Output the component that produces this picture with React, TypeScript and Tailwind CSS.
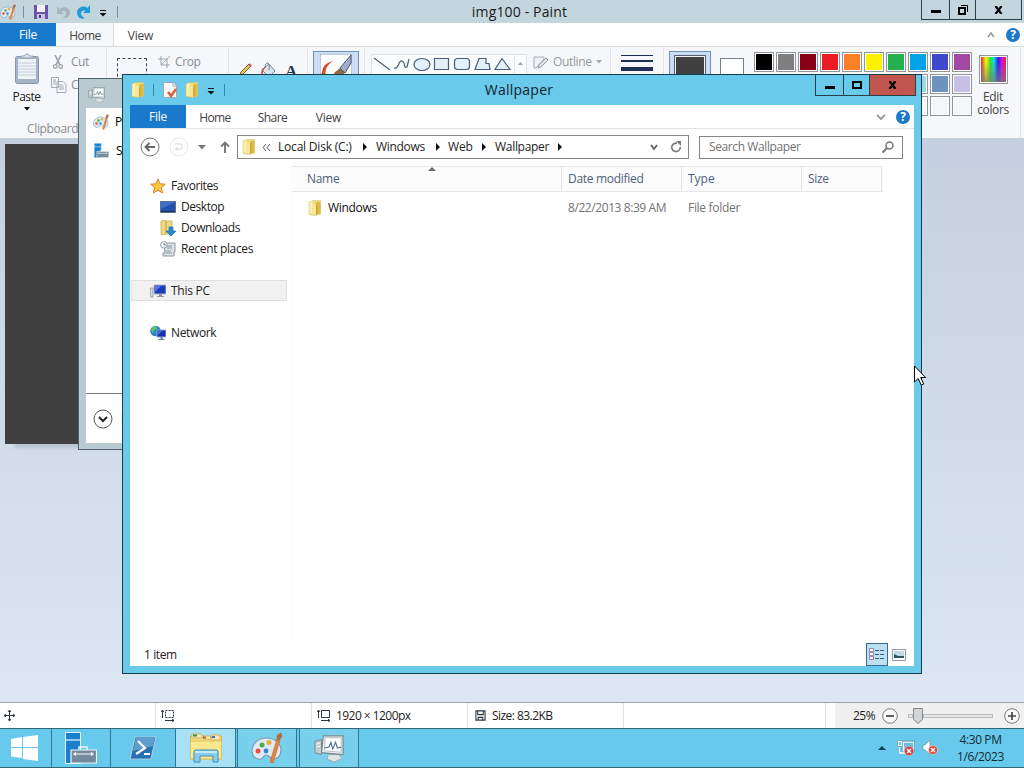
import type { ReactNode } from "react";

function Folder({ className = "w-4 h-4" }: { className?: string }) {
  return (
    <svg viewBox="0 0 16 16" className={`${className} shrink-0`}>
      <path d="M2 2l4-1.500h7.500V14L8 15.500 2 14.500z" fill="#eedb80" stroke="#d6bd62" strokeWidth=".5" />
      <path d="M9.500 2h4v11.500l-4 1.500z" fill="#dfbd45" />
      <path d="M2.500 2l3-1v13l-3-.5z" fill="#fbf1b2" />
      <path d="M6 3l3 2v10l-3-1z" fill="#f8e895" />
      <path d="M9 5l1.500-2v11L9 15z" fill="#c9a438" />
    </svg>
  );
}

function Palette({ className = "w-4 h-4" }: { className?: string }) {
  return (
    <svg viewBox="0 0 32 32" className={`${className} shrink-0`}>
      <path d="M15 6C7 6 1 12 1 19c0 6 5 9 9 8 3-1 2-4 5-4 4 0 4 5 8 4 5-1 7-5 7-9 0-7-7-12-15-12z" fill="#dcebf5" stroke="#7d9db3" strokeWidth="1.2" />
      <circle cx="7" cy="19" r="2.5" fill="#e0523c" />
      <circle cx="11" cy="13" r="2.5" fill="#58a94d" />
      <circle cx="18" cy="10.500" r="2.500" fill="#eab13a" />
      <circle cx="15" cy="19" r="2.400" fill="#3f82cf" />
      <path d="M26 7l3 1-7 23-3-1z" fill="#e8853a" stroke="#b3672d" strokeWidth=".6" />
      <path d="M25.500 8l.5-5 4-2.500 1.500 3.500-3 4.500z" fill="#b06a3a" />
    </svg>
  );
}

function ServerManager({ className }: { className: string }) {
  return (
    <svg viewBox="0 0 32 32" className={`${className} shrink-0`}>
      <path d="M.5.500h15v31H.5z" fill="#1b80cb" stroke="#dff2fb" strokeWidth="1" />
      <path d="M0 8h15" stroke="#dff2fb" strokeWidth="1.3" />
      <path d="M14 18v-3h8v3" fill="none" stroke="#eef6fa" strokeWidth="1.4" />
      <path d="M6 18h25.5v13H6z" fill="#75899c" stroke="#eef6fa" strokeWidth="1.2" />
      <path d="M9 22h19M11 20.500l-2 1.500 2 1.500M26 20.500l2 1.500-2 1.500" fill="none" stroke="#fff" strokeWidth="1.2" />
    </svg>
  );
}

function TaskMonitor({ className }: { className: string }) {
  return (
    <svg viewBox="0 0 32 32" className={`${className} shrink-0`}>
      <path d="M1 9l7-2v16l-7-2z" fill="#c5cbcd" stroke="#7c878c" />
      <path d="M2.500 12l4-1M2.500 15l4-1" stroke="#fff" />
      <path d="M15 23h11l4 4-8 4-8-3z" fill="#dfe4e6" stroke="#8b979d" strokeWidth=".7" />
      <path d="M10 3h21v20L8 21z" fill="#eef3f5" stroke="#768a93" strokeWidth="1.300" />
      <path d="M12 5h17v15.500l-18-1.500z" fill="#fff" stroke="#aebfc6" />
      <path d="M11 16l5-1 2-5 2 7 3-7 2 6 4-1" fill="none" stroke="#46718c" strokeWidth="1.200" />
    </svg>
  );
}

function Help() {
  return (
    <span className="flex h-[14px] w-[14px] shrink-0 items-center justify-center rounded-full bg-[#1c78ca] text-[12px] leading-none font-bold text-white">
      ?
    </span>
  );
}

function Down({ className = "text-black" }: { className?: string }) {
  return (
    <svg viewBox="0 0 6 4" className={`h-1 w-1.5 shrink-0 ${className}`}>
      <path d="M0 0h6L3 3.500z" fill="currentColor" />
    </svg>
  );
}

function QuickMenu() {
  return (
    <svg viewBox="0 0 8 7" className="h-[7px] w-2 shrink-0">
      <path d="M1 .5h6" stroke="#111" />
      <path d="M.5 3h7L4 6.500z" fill="#111" />
    </svg>
  );
}

function WinButton({ className, children }: { className: string; children: ReactNode }) {
  return <div className={`flex items-center justify-center border-r border-b border-[#2b3f48] ${className}`}>{children}</div>;
}

const Min = () => <span className="mt-1 h-[3px] w-[10px] bg-black" />;
const Close = () => (
  <svg viewBox="0 0 9 8" className="h-2 w-[9px]">
    <path d="M1.500 0l6 8M7.500 0l-6 8" stroke="#000" strokeWidth="2.200" />
  </svg>
);

const swatches = [
  ["bg-black", "bg-[#7f7f7f]", "bg-[#880015]", "bg-[#ed1c24]", "bg-[#ff7f27]", "bg-[#fff200]", "bg-[#22b14c]", "bg-[#00a2e8]", "bg-[#3f48cc]", "bg-[#a349a4]"],
  ["bg-white", "bg-[#c3c3c3]", "bg-[#b97a57]", "bg-[#ffaec9]", "bg-[#ffc90e]", "bg-[#efe4b0]", "bg-[#b5e61d]", "bg-[#99d9ea]", "bg-[#7092be]", "bg-[#c8bfe7]"],
  ["bg-[#f5f6f7]", "bg-[#f5f6f7]", "bg-[#f5f6f7]", "bg-[#f5f6f7]", "bg-[#f5f6f7]", "bg-[#f5f6f7]", "bg-[#f5f6f7]", "bg-[#f5f6f7]", "bg-[#f5f6f7]", "bg-[#f5f6f7]"],
];

function PaintTitle() {
  return (
    <div className="grid h-[23px] shrink-0 grid-cols-[350px_1fr_350px] bg-[#c4d6dd]">
      <div className="flex items-center">
        <Palette />
        <div className="ml-[7px] h-3 w-px bg-[#7c8e96]" />
        <svg viewBox="0 0 14 14" className="ml-[10px] h-[14px] w-[14px]">
          <path d="M0 0h14v14H0z" fill="#6d55a5" />
          <path d="M3 0h8v7H3z" fill="#f3f1fa" />
          <path d="M3 9h8v5H3z" fill="#c9c2e0" />
          <path d="M5 10h2v3H5z" fill="#4b3b7b" />
        </svg>
        <svg viewBox="0 0 14 14" className="ml-2 h-[14px] w-[14px]">
          <path d="M1 1v8h7L5.500 6.500C8 5 10 6 10 8.500S8 12 6 13c4 1 8-1 8-5.500S8 .5 3.500 4z" fill="#a7b4bd" />
        </svg>
        <svg viewBox="0 0 14 14" className="ml-[7px] h-[14px] w-[14px]">
          <path d="M13 0v8H6l2.500-2.300C6 5 4 6 4 8.500S6 12 8 13C4 15 0 12 0 7.500S6-.5 10.500 3z" fill="#229bd9" />
        </svg>
        <div className="ml-2 flex pt-[3px]"><QuickMenu /></div>
        <div className="ml-[10px] h-3 w-px bg-[#7c8e96]" />
      </div>
      <div className="pl-[15px] text-center text-[14px] leading-6 tracking-[0.15px] text-[#1a1a1a]">img100 - Paint</div>
      <div className="flex h-5 justify-end pr-0.5">
        <WinButton className="w-[29px] border-l"><Min /></WinButton>
        <WinButton className="w-[26px]">
          <svg viewBox="0 0 10 10" className="h-[10px] w-[10px]">
            <path d="M3 .5h6.500V7" fill="none" stroke="#000" />
            <path d="M1 3h6v6H1z" fill="none" stroke="#000" strokeWidth="2" />
          </svg>
        </WinButton>
        <WinButton className="w-[46px]"><Close /></WinButton>
      </div>
    </div>
  );
}

function PaintRibbon() {
  return (
    <div className="flex h-[92px] shrink-0 overflow-hidden border-t border-[#dadbdc] bg-[#f5f7fa] text-[12px] text-[#444]">
      <div className="flex w-[107px] shrink-0 flex-col border-r border-[#e1e4e8]">
        <div className="flex h-[74px]">
          <div className="flex w-[53px] flex-col items-center pt-[6px] text-[#222]">
            <svg viewBox="0 0 26 32" className="h-8 w-[26px]">
              <rect x="1.500" y="3.500" width="23" height="27" rx="2" fill="#a3b4c8" stroke="#8797ab" />
              <path d="M4 6h18v20H4z" fill="#eef3f8" />
              <path d="M4 10h18M4 13h18M4 16h18M4 19h18M4 22h18" stroke="#c2cedb" />
              <path d="M7 5V3h3q3-4 6 0h3v2z" fill="#d7e0e9" stroke="#8596a8" strokeWidth=".8" />
            </svg>
            <div className="mt-[3px] leading-[17px] tracking-[-0.5px]">Paste</div>
            <Down className="mt-[2px] text-black" />
          </div>
          <div className="text-[#8a8d91]">
            <div className="flex h-[30px] items-center">
              <svg viewBox="0 0 10 14" className="h-[14px] w-[10px]">
                <path d="M2 0l5 10M8 0L3 10" stroke="#9aa3ab" strokeWidth="1.600" />
                <circle cx="2.300" cy="11.500" r="1.800" fill="none" stroke="#9aa3ab" strokeWidth="1.200" />
                <circle cx="7.700" cy="11.500" r="1.800" fill="none" stroke="#9aa3ab" strokeWidth="1.200" />
              </svg>
              <span className="ml-2 tracking-[-0.5px]">Cut</span>
            </div>
            <div className="-ml-0.5 flex h-[15px] items-center">
              <svg viewBox="0 0 16 16" className="h-4 w-4">
                <path d="M.5.500h7v10h-7zM6 4.500h6l3 3v8H6z" fill="#f5f7fa" stroke="#a1abb6" />
                <path d="M2 3h3M2 5h3M2 7h3M8 8h4M8 10h5M8 12h5" stroke="#a1abb6" />
              </svg>
              <span className="ml-1">Copy</span>
            </div>
          </div>
        </div>
        <div className="pl-[27px] tracking-[-0.35px] text-[#8b8b8b]">Clipboard</div>
      </div>
      <div className="flex w-[122px] shrink-0 items-start border-r border-[#e1e4e8] text-[#8a8d91]">
        <div className="mt-[11px] ml-[10px] h-6 w-[30px] border border-dashed border-[#30475c]" />
        <svg viewBox="0 0 13 12" className="mt-[9px] ml-[11px] h-3 w-[13px]">
          <path d="M3 0v9h9M0 3h9v9M3 9l9-9" fill="none" stroke="#a0a8b0" />
        </svg>
        <span className="mt-[6px] ml-1 tracking-[-0.4px]">Crop</span>
      </div>
      <div className="flex w-[79px] shrink-0 items-start gap-[8px] border-r border-[#e1e4e8] pt-[15px] pl-[9px]">
        <svg viewBox="0 0 14 16" className="h-4 w-[14px]">
          <path d="M1 15l2-5 8-8 2 2-8 8z" fill="#edc65d" stroke="#6f6035" />
          <path d="M11 2l2 2" stroke="#c1544a" strokeWidth="2" />
        </svg>
        <svg viewBox="0 0 17 17" className="h-[17px] w-[17px]">
          <path d="M2 8l7-6 6 7-6 6z" fill="#dbe5ed" stroke="#728290" />
          <path d="M5 6Q5 1 8 1q2 1 1 7" fill="none" stroke="#728290" />
          <path d="M2 7l4-3-3 5v5l-2-3z" fill="#e0483c" />
        </svg>
        <span className="mt-[2px] font-['Liberation_Serif',serif] text-[17px] leading-4 font-bold text-[#25334b]">A</span>
      </div>
      <div className="flex w-[57px] shrink-0 border-r border-[#e1e4e8] pl-[5px]">
        <div className="mt-1 flex h-[60px] w-[46px] justify-center border border-[#6f91b8] bg-[#c9def5] pt-0.5">
          <svg viewBox="0 0 32 32" className="h-8 w-8">
            <path d="M0 0h32v32H0z" fill="#fff" stroke="#7993ad" />
            <path d="M13 7Q5 9 3 14L1 22h4l1-7q2-5 7-8z" fill="#d6482c" />
            <path d="M31 1L20 14l5 5 6-10z" fill="#a3add0" stroke="#44506c" />
            <path d="M20 14l5 5-7 5q-3-1-4-5z" fill="#8d6b42" />
          </svg>
        </div>
      </div>
      <div className="flex w-[246px] shrink-0 border-r border-[#e1e4e8] pt-[7px] pl-[6px]">
        <div className="flex h-[50px] w-[156px] border border-[#dfe4ea] bg-[#fafcfe]">
          <svg viewBox="0 0 142 20" className="h-5 w-[142px]">
            <g fill="#e4f1fb" stroke="#46607c" strokeWidth="1.200">
              <path d="M2 3l16 12" />
              <path d="M22 13c5 2 4-8 8-7s1 8 5 6l2-8" fill="none" />
              <ellipse cx="50" cy="9.500" rx="8" ry="6" />
              <path d="M62.500 3.500h14v11h-14z" />
              <rect x="82.500" y="3.500" width="15" height="11" rx="3" />
              <path d="M103 14.500l4-11h7v5h3l1 6z" />
              <path d="M130 3.500l8 11h-15z" />
            </g>
          </svg>
          <div className="flex w-3 justify-center border-l border-[#dfe4ea] pt-[7px]">
            <svg viewBox="0 0 5 3" className="h-[3px] w-[5px]"><path d="M0 3l2.500-3L5 3z" fill="#9aa1a8" /></svg>
          </div>
        </div>
        <svg viewBox="0 0 16 14" className="ml-[6px] mt-0.5 h-[14px] w-4 shrink-0">
          <path d="M1 1h10v2L3 12H1z" fill="#edf0f4" stroke="#a7afb8" />
          <path d="M5 12l1-3 7-7 2 2-7 7z" fill="#dfe3e8" stroke="#959fa9" />
        </svg>
        <div className="ml-[4px] -mt-px tracking-[-0.35px] text-[#96999c]">Outline</div>
        <Down className="mt-[6px] ml-1 text-[#a7a9ac]" />
      </div>
      <div className="flex w-[53px] shrink-0 flex-col items-center gap-[4px] border-r border-[#e1e4e8] pt-2">
        <div className="h-px w-8 bg-[#1f2e55]" />
        <div className="h-0.5 w-8 bg-[#1f2e55]" />
        <div className="mt-px h-1 w-8 bg-[#1f2e55]" />
      </div>
      <div className="flex w-[357px] shrink-0 border-r border-[#e1e4e8] pl-[5px]">
        <div className="mt-1 h-[60px] w-[42px] border border-[#6f91b8] bg-[#c9def5] px-[4px] pt-[3px]">
          <div className="h-8 border border-[#56616b] bg-[#404040] outline outline-1 -outline-offset-2 outline-[#f0f3f5]" />
        </div>
        <div className="mt-[11px] ml-[9px] h-6 w-[24px] border border-[#777f87] bg-white" />
        <div className="mt-[5px] ml-[10px] flex flex-col gap-0.5">
          {swatches.map((row, r) => (
            <div key={r} className="flex gap-0.5">
              {row.map((colour, c) => (
                <div key={c} className="h-5 w-5 border border-[#92969b] bg-white p-px">
                  <div className={`h-full ${colour}`} />
                </div>
              ))}
            </div>
          ))}
        </div>
        <div className="flex w-[42px] flex-col items-center pt-2 text-center leading-[13px] tracking-[-0.35px]">
          <div className="mb-[6px] h-[29px] w-[29px] border border-[#92969b] bg-white p-px">
            <div className="h-full bg-[linear-gradient(to_bottom,transparent_20%,#777b),linear-gradient(to_right,#e22,#ef1_20%,#3d3_38%,#1dd_52%,#22e_68%,#d1d_85%,#f12)]" />
          </div>
          <div>Edit</div>
          <div>colors</div>
        </div>
      </div>
    </div>
  );
}

function SizeIcon({ dashed = false }: { dashed?: boolean }) {
  return (
    <svg viewBox="0 0 14 13" className="h-[13px] w-[14px]">
      <g fill="none" stroke="#2e3946">
        <path d="M4.500 1.500h8v7h-8z" strokeDasharray={dashed ? "2 1" : undefined} />
        <path d="M1.500 1v8M0 3l1.500-2L3 3M4 11.500h9M11 10l2 1.500-2 1.500" />
      </g>
    </svg>
  );
}

function PaintStatus() {
  return (
    <div className="flex h-[26px] shrink-0 items-stretch border-t border-[#9aa6b6] bg-white text-[12px] text-[#1d1d1d]">
      <div className="flex w-[156px] items-center border-r border-[#dfe2e5] pl-1">
        <svg viewBox="0 0 11 11" className="h-[11px] w-[11px]">
          <path d="M5.500 0v11M0 5.500h11M4 2l1.500-2L7 2M4 9l1.500 2L7 9M2 4L0 5.500 2 7M9 4l2 1.500L9 7" fill="none" stroke="#2e3946" />
        </svg>
      </div>
      <div className="flex w-[156px] items-center border-r border-[#dfe2e5] pl-[5px]"><SizeIcon dashed /></div>
      <div className="flex w-[156px] items-center gap-[5px] border-r border-[#dfe2e5] pl-[5px]"><SizeIcon /><span className="tracking-[-0.55px]">1920 × 1200px</span></div>
      <div className="flex w-[156px] items-center border-r border-[#dfe2e5] pl-[7px]">
        <svg viewBox="0 0 12 12" className="h-[11px] w-[11px]">
          <path d="M1 1h10v10H1zM3 1v4h6V1M3.500 11V8h5v3" fill="none" stroke="#2e3946" strokeWidth="1.200" />
        </svg>
        <span className="ml-[6px] tracking-[-0.55px]">Size: 83.2KB</span>
      </div>
      <div className="w-[202px] border-r border-[#dfe2e5]" />
      <div className="ml-[9px] flex flex-1 items-center bg-[#f0f0f0] pl-[18px]">
        <span className="w-[22px] tracking-[-0.5px]">25%</span>
        <Zoom sign="M4 8h8" className="ml-[7px]" />
        <div className="ml-[10px] flex h-4 w-[85px] items-center">
          <div className="h-[4px] w-[5px] border border-[#bbbdbf] bg-[#e4e6e7]" />
          <svg viewBox="0 0 10 16" className="h-4 w-[10px] shrink-0"><path d="M.5.500h9v11L5 15.500.500 11.500z" fill="#d3d5d7" stroke="#858789" /></svg>
          <div className="h-[4px] flex-1 border border-[#bbbdbf] bg-[#e4e6e7]" />
        </div>
        <Zoom sign="M4 8h8M8 4v8" className="ml-[11px]" />
      </div>
    </div>
  );
}

function Zoom({ sign, className }: { sign: string; className: string }) {
  return (
    <svg viewBox="0 0 16 16" className={`h-4 w-4 shrink-0 ${className}`}>
      <circle cx="8" cy="8" r="7.300" fill="#f8f8f8" stroke="#75787a" />
      <path d={sign} stroke="#454545" strokeWidth="1.700" />
    </svg>
  );
}

function Paint() {
  return (
    <div className="flex h-[728px] flex-col">
      <PaintTitle />
      <div className="flex h-[23px] shrink-0 bg-white text-[12px] text-[#444]">
        <div className="w-14 bg-[#1979ca] pt-[3px] text-center tracking-[-0.2px] text-white">File</div>
        <div className="-mb-px w-[58px] border-r border-[#dadbdc] bg-[#f5f7fa] pt-[4px] pl-px text-center tracking-[-0.6px]">Home</div>
        <div className="w-[53px] pt-[4px] text-center tracking-[-0.2px]">View</div>
        <div className="ml-auto flex items-center gap-[11px] pr-[4px]">
          <svg viewBox="0 0 8 6" className="h-1.5 w-2"><path d="M1 5l3-4 3 4" fill="none" stroke="#999" strokeWidth="1.600" /></svg>
          <Help />
        </div>
      </div>
      <PaintRibbon />
      <div className="flex-1 bg-linear-to-b from-[#c5cfdf] to-[#dce7f3] pt-[6px] pl-[5px]">
        <div className="h-[300px] w-[200px] bg-[#404040] shadow-[9px_5px_3px_-1px_#b9c3d3]" />
      </div>
      <PaintStatus />
    </div>
  );
}

function TaskWindow() {
  return (
    <div className="absolute top-[78px] left-[78px] flex h-[372px] w-[120px] flex-col border border-[#52616a] bg-[#b9cad0] px-[7px] pb-[6px] text-[12px] whitespace-nowrap text-black">
      <div className="flex h-[29px] items-center pt-0.5 pl-0.5"><TaskMonitor className="h-[17px] w-[17px]" /></div>
      <div className="flex flex-1 flex-col bg-white">
        <div className="flex h-[28px] items-center gap-[6px] pl-[7px]"><Palette /> Paint</div>
        <div className="flex h-[29px] items-center gap-[7px] pl-2"><ServerManager className="h-[15px] w-[15px]" /> Server Manager</div>
        <div className="mt-auto flex h-[50px] items-center gap-2 border-t border-[#777] pl-[7px]">
          <svg viewBox="0 0 20 20" className="h-5 w-5 shrink-0"><circle cx="10" cy="10" r="9" fill="#fff" stroke="#555" /><path d="M6 8l4 4 4-4" fill="none" stroke="#222" strokeWidth="2" /></svg>
          <span>More</span>
        </div>
      </div>
    </div>
  );
}

function NavRow({ icon, label, className = "pl-5", tracking = "tracking-[-0.25px]" }: { icon: ReactNode; label: string; className?: string; tracking?: string }) {
  return (
    <div className={`flex h-[21px] items-center gap-[5px] ${className}`}>
      {icon}
      <span className={`whitespace-nowrap ${tracking}`}>{label}</span>
    </div>
  );
}

function Sidebar() {
  return (
    <div className="w-[158px] shrink-0 pt-[9px]">
      <NavRow tracking="tracking-[-0.4px]" label="Favorites" icon={<svg viewBox="0 0 16 16" className="h-4 w-4"><path d="M8 .8l2.100 5 5.200.400-4 3.500 1.300 5.300L8 12.200 3.400 15l1.300-5.300-4-3.500L5.900 5.800z" fill="#ffc83d" stroke="#dc8230" /></svg>} />
      <NavRow className="pl-[30px]" tracking="tracking-[-0.45px]" label="Desktop" icon={<svg viewBox="0 0 16 14" className="h-[14px] w-4"><path d="M.5 1.500h15v11H.5z" fill="#2450ac" stroke="#5d7189" /><path d="M1 2h14L1 9z" fill="#3d70cb" /><path d="M1 11h14v1H1z" fill="#1c2c50" /></svg>} />
      <NavRow className="pl-[30px]" tracking="tracking-[-0.4px]" label="Downloads" icon={<svg viewBox="0 0 16 16" className="h-4 w-4"><path d="M1 1l5-1v14l-5 1zM6 1h6v13H6z" fill="#edd982" stroke="#c5ab52" strokeWidth=".7" /><path d="M9 7h4v4h3l-5 5-5-5h3z" fill="#268ad5" stroke="#1465a7" strokeWidth=".6" /></svg>} />
      <NavRow className="pl-[30px]" tracking="tracking-[-0.35px]" label="Recent places" icon={<svg viewBox="0 0 16 16" className="h-4 w-4"><path d="M4 2h11v9h-1v4H3v-3h2z" fill="#dfe3e6" stroke="#8c969e" /><path d="M7 5h5M7 7h5M6 10h5M6 12h6" stroke="#8d9aa3" /><circle cx="3.800" cy="3.800" r="3.300" fill="#f8fafa" stroke="#929fa6" /><path d="M4 2v2h2" fill="none" stroke="#687984" /></svg>} />
      <div className="mt-[21px] mr-px ml-px border border-[#e0e0e0] bg-[#f1f1f1]">
        <NavRow className="-my-px pl-[18px]" label="This PC" icon={<svg viewBox="0 0 16 16" className="h-4 w-4"><path d="M.5 5h2.500v9H.5z" fill="#dce2dc" stroke="#7f8b85" strokeWidth=".7" /><path d="M4 2h12v9H4z" fill="#1c39b6" stroke="#aab7d2" /><path d="M5 3h6L5 9z" fill="#5576da" /><path d="M9 11h3v2h2v1H7v-1h2z" fill="#8998a8" /></svg>} />
      </div>
      <div className="mt-[21px]">
        <NavRow tracking="tracking-[-0.35px]" label="Network" icon={<svg viewBox="0 0 16 16" className="h-4 w-4"><circle cx="5.500" cy="6" r="5.300" fill="#2688cc" /><path d="M1 4q3-4 5-3l1 3-3 1-1 4zM6 7l3-1 1 2-3 2z" fill="#61c363" /><path d="M7 5h9v7H7z" fill="#1731ad" stroke="#94a5cc" /><path d="M8 6h4l-4 4z" fill="#486fe1" /><path d="M10.500 12h2v2h2v1h-6v-1h2z" fill="#6c7d91" /></svg>} />
      </div>
    </div>
  );
}

const Crumb = () => <svg viewBox="0 0 4 8" className="h-2 w-1 shrink-0"><path d="M0 0l4 4-4 4z" fill="#111" /></svg>;

function AddressRow() {
  return (
    <div className="flex h-[38px] shrink-0 items-center pb-[2px] text-[12px] text-[#222]">
      <svg viewBox="0 0 20 20" className="ml-[10px] h-5 w-5"><circle cx="10" cy="10" r="9" fill="#fff" stroke="#777" /><path d="M15 10H6M9.500 6l-4 4 4 4" fill="none" stroke="#666" strokeWidth="1.900" /></svg>
      <svg viewBox="0 0 20 20" className="ml-[9px] h-5 w-5"><circle cx="10" cy="10" r="9" fill="#fff" stroke="#e6e6e6" /><path d="M6 7h7v5H6M9 14l-2-2 2-2" fill="none" stroke="#dadada" /></svg>
      <svg viewBox="0 0 8 5" className="ml-[9px] h-[5px] w-2"><path d="M0 0h8L4 4.500z" fill="#777" /></svg>
      <svg viewBox="0 0 10 12" className="ml-[14px] h-3 w-[10px]"><path d="M5 12V1.500M1 5.500l4-4 4 4" fill="none" stroke="#777" strokeWidth="1.900" /></svg>
      <div className="ml-[7px] flex h-6 w-[452px] items-center border border-[#858585] pl-[3px] tracking-[-0.2px]">
        <Folder />
        <svg viewBox="0 0 9 7" className="ml-[5px] h-[7px] w-[9px]"><path d="M4 0L1 3.500 4 7M8 0L5 3.500 8 7" fill="none" stroke="#555" /></svg>
        <span className="ml-[7px] w-[85px]">Local Disk (C:)</span><Crumb />
        <span className="ml-[9px] w-[60px] tracking-[-0.3px]">Windows</span><Crumb />
        <span className="ml-[8px] w-[34px]">Web</span><Crumb />
        <span className="ml-[9px] w-[63px] tracking-[-0.3px]">Wallpaper</span><Crumb />
        <svg viewBox="0 0 8 7" className="ml-auto h-[7px] w-2"><path d="M1 1l3 4 3-4" fill="none" stroke="#666" strokeWidth="1.900" /></svg>
        <svg viewBox="0 0 12 12" className="mr-[6px] ml-3 h-3 w-3"><path d="M2.700 3.500A4.300 4.300 0 1 0 10.300 6" fill="none" stroke="#777" strokeWidth="1.600" /><path d="M2.500 4A4.500 4.500 0 0 1 7 2.200" fill="none" stroke="#777" strokeWidth="1.600" /><path d="M6 0h5v5z" fill="#777" /></svg>
      </div>
      <div className="ml-[10px] flex h-[23px] w-[204px] items-center justify-between border border-[#858585] pr-2 pl-[9px] text-[#737373]">
        <span className="tracking-[-0.4px]">Search Wallpaper</span>
        <svg viewBox="0 0 12 12" className="h-3 w-3"><circle cx="7.500" cy="4.500" r="3.500" fill="none" stroke="#777" strokeWidth="1.500" /><path d="M5 7l-4.500 4.500" stroke="#777" strokeWidth="2" /></svg>
      </div>
    </div>
  );
}

function Explorer() {
  return (
    <div className="absolute top-[74px] left-[122px] flex h-[600px] w-[800px] flex-col border border-[#173c4a] bg-[#69caeb] px-[7px] pb-[7px]">
      <div className="grid h-[30px] shrink-0 grid-cols-[150px_1fr_150px]">
        <div className="flex items-center">
          <Folder />
          <div className="ml-[7px] h-3 w-px bg-[#3989a5]" />
          <svg viewBox="0 0 14 16" className="ml-[9px] h-4 w-[14px]"><path d="M.5.500h10l3 3v12H.5z" fill="#fafafa" stroke="#a0a8ac" /><path d="M10 1v3h3" fill="none" stroke="#a0a8ac" /><path d="M5 10l3 4 5-7" fill="none" stroke="#df5c3a" strokeWidth="2.500" /></svg>
          <Folder className="ml-[7px] h-4 w-4" />
          <div className="ml-[7px] pt-[3px]"><QuickMenu /></div>
          <div className="ml-[9px] h-3 w-px bg-[#3989a5]" />
        </div>
        <div className="pt-[5px] pr-[6px] text-center text-[14px] leading-5 tracking-[0.25px] text-[#12232b]">Wallpaper</div>
        <div className="-mr-[2px] flex h-[21px] justify-end">
          <WinButton className="w-[29px] border-l"><Min /></WinButton>
          <WinButton className="w-[26px]"><span className="h-2 w-[10px] border-2 border-black" /></WinButton>
          <WinButton className="w-[46px] bg-[#c1564f]"><Close /></WinButton>
        </div>
      </div>
      <div className="flex flex-1 flex-col bg-white text-[12px] text-[#222]">
        <div className="flex h-6 shrink-0 border-b border-[#e2e3e4] text-[#444]">
          <div className="w-14 bg-[#1979ca] pt-[3px] text-center tracking-[-0.2px] text-white">File</div>
          <div className="w-[58px] pt-[4px] text-center tracking-[-0.6px]">Home</div>
          <div className="w-[57px] pt-[4px] text-center tracking-[-0.6px]">Share</div>
          <div className="w-[55px] pt-[4px] text-center tracking-[-0.2px]">View</div>
          <div className="ml-auto flex items-center gap-[10px] pr-1">
            <svg viewBox="0 0 10 6" className="h-1.5 w-[10px]"><path d="M1 1l4 4 4-4" fill="none" stroke="#999" strokeWidth="1.800" /></svg>
            <Help />
          </div>
        </div>
        <AddressRow />
        <div className="-mt-px flex min-h-0 flex-1">
          <Sidebar />
          <div className="ml-[3px] flex-1 border-l border-[#fbfbfb]">
            <div className="flex h-[26px] w-[591px] border-y border-[#e5e7ea] bg-[#fcfcfd] text-[#4c607a]">
              <div className="relative w-[270px] border-r border-[#e0e3e6] pt-[3px] pl-[15px] tracking-[-0.3px]">
                Name
                <svg viewBox="0 0 8 4" className="absolute top-0 left-[136px] h-1 w-2"><path d="M4 0l4 4H0z" fill="#626b76" /></svg>
              </div>
              <div className="w-[120px] border-r border-[#e0e3e6] pt-[3px] pl-[6px] tracking-[-0.3px]">Date modified</div>
              <div className="w-[120px] border-r border-[#e0e3e6] pt-[3px] pl-[6px]">Type</div>
              <div className="w-[80px] border-r border-[#e0e3e6] pt-[3px] pl-[6px] tracking-[-0.3px]">Size</div>
            </div>
            <div className="mt-[5px] flex h-[21px] items-center text-[#737373]">
              <div className="flex w-[270px] items-center gap-[5px] pl-[15px] tracking-[-0.3px] text-[#111]"><Folder />Windows</div>
              <div className="w-[120px] pl-[6px] tracking-[-0.42px]">8/22/2013 8:39 AM</div>
              <div className="w-[120px] pl-[6px] tracking-[-0.3px]">File folder</div>
            </div>
          </div>
        </div>
        <div className="flex h-[23px] shrink-0 items-center pl-[14px]">
          <span className="tracking-[-0.4px]">1 item</span>
          <div className="ml-auto flex h-[23px] w-[22px] items-center justify-center border border-[#3b6b91] bg-[#bcdff1]">
            <svg viewBox="0 0 16 13" className="h-[13px] w-4"><path d="M.5.500h4v3h-4zM.5 4.500h4v3h-4zM.5 8.500h4v3h-4z" fill="#fff" stroke="#856d9c" strokeWidth=".8" /><path d="M6 2.500h9M6 6.500h9M6 10.500h9" stroke="#355c83" strokeDasharray="4 1" /></svg>
          </div>
          <svg viewBox="0 0 14 12" className="mr-2 ml-[4px] h-3 w-[14px]"><path d="M.5.500h13v11H.5z" fill="#fff" stroke="#8d9ca5" /><path d="M2 2h10v7H2z" fill="#bddbe9" /><path d="M2 5l4 2h6v2H2z" fill="#28595e" /></svg>
        </div>
      </div>
    </div>
  );
}

function TaskButton({ className, children }: { className: string; children: ReactNode }) {
  return <div className={`flex shrink-0 items-center justify-center border-r border-[#2c7892] ${className}`}>{children}</div>;
}

function Taskbar() {
  return (
    <div className="flex h-10 border-y border-[#2d6679] bg-[#67c9eb]">
      <TaskButton className="w-[52px] pr-px">
        <svg viewBox="0 0 28 26" className="h-[26px] w-7"><path d="M0 4l11-2v10H0zM12 2l15-2v12H12zM0 13h11v10L0 21.500zM12 13h15v13l-15-2z" fill="#fff" /></svg>
      </TaskButton>
      <TaskButton className="w-[59px]"><ServerManager className="h-8 w-8" /></TaskButton>
      <TaskButton className="w-[65px]">
        <svg viewBox="0 0 28 24" className="h-6 w-7">
          <path d="M6 1h21l-5 22H1z" fill="#2870ad" stroke="#a0cbe2" strokeWidth="1.200" />
          <path d="M7 2h19l-2 8L4 15z" fill="#5e9dcd" />
          <path d="M9 5l7 7-9 6M15 18h6" fill="none" stroke="#fff" strokeWidth="2.200" />
        </svg>
      </TaskButton>
      <TaskButton className="w-[60px] bg-[#a8e0f4]">
        <svg viewBox="0 0 34 30" className="h-[30px] w-[34px]">
          <path d="M1.500 3h9l2 2h8l2-2h10v23h-31z" fill="#f6df7b" stroke="#d4b459" />
          <path d="M3 1h9l2 4H3zM13 3h8l1 3h-8zM22 2h9v5h-8z" fill="#f9edb3" stroke="#cdb466" />
          <path d="M4 2.500h4" stroke="#29935b" strokeWidth="2" />
          <path d="M14 4.500h3" stroke="#d0533e" strokeWidth="2" />
          <path d="M23 4h3" stroke="#3a6fc0" strokeWidth="2" />
          <path d="M1.500 8h31v18h-31z" fill="#fae88f" stroke="#dbc263" />
          <path d="M5 29V19q0-2 2-2h20q2 0 2 2v10h-5v-6H11v6z" fill="#8bcdec" stroke="#398fb8" />
          <path d="M6 19h22" stroke="#d7f3ff" strokeWidth="1.500" />
        </svg>
      </TaskButton>
      <TaskButton className="ml-px w-[60px] border-l bg-[#78d0ec]"><Palette className="h-8 w-8" /></TaskButton>
      <TaskButton className="ml-0.5 w-[60px] border-l bg-[#78d0ec]"><TaskMonitor className="h-[30px] w-8" /></TaskButton>
      <div className="ml-auto flex items-center pr-[17px] text-[12px] text-[#162b36]">
        <svg viewBox="0 0 8 4" className="h-1 w-2"><path d="M4 0l4 4H0z" fill="#113a57" /></svg>
        <svg viewBox="0 0 18 16" className="ml-[11px] h-4 w-[18px]">
          <path d="M6 2h11v9H7z" fill="#66bddf" stroke="#fff" strokeWidth="1.400" />
          <path d="M5.500 1.200h12v10.500h-11" fill="none" stroke="#416f83" strokeWidth=".6" />
          <path d="M1 1h4v5H1zM3 6v7h6" fill="none" stroke="#fff" strokeWidth="1.600" />
          <path d="M.5.500h5v6h-5zM3.800 7v5" fill="none" stroke="#416f83" strokeWidth=".6" />
          <circle cx="12" cy="11" r="4.700" fill="#d63d3d" stroke="#f5d0d0" strokeWidth=".5" />
          <path d="M10 9l4 4M14 9l-4 4" stroke="#fff" strokeWidth="1.500" />
        </svg>
        <svg viewBox="0 0 16 16" className="ml-[7px] h-4 w-4">
          <path d="M1 5h2l5-5v14L3 10H1z" fill="#fff" stroke="#698c9a" strokeWidth=".7" />
          <circle cx="11" cy="10" r="4.500" fill="#d64a36" stroke="#ffe0d8" strokeWidth=".6" />
          <path d="M9 8l4 4M13 8l-4 4" stroke="#fff" strokeWidth="1.400" />
        </svg>
        <div className="ml-[16px] w-[53px] text-center leading-[17px] tracking-[-0.4px] whitespace-nowrap"><div>4:30 PM</div><div>1/6/2023</div></div>
      </div>
    </div>
  );
}

export default function App() {
  return (
    <div className="relative h-[768px] w-[1024px] overflow-hidden font-['Open_Sans',sans-serif] select-none">
      <Paint />
      <TaskWindow />
      <Explorer />
      <svg viewBox="0 0 13 21" className="absolute top-[365px] left-[914px] h-[21px] w-[13px]">
        <path d="M.5 1v16l3.700-3.500 3 6.500 2.500-1-3-6.500h5z" fill="#fff" stroke="#000" />
      </svg>
      <Taskbar />
    </div>
  );
}
